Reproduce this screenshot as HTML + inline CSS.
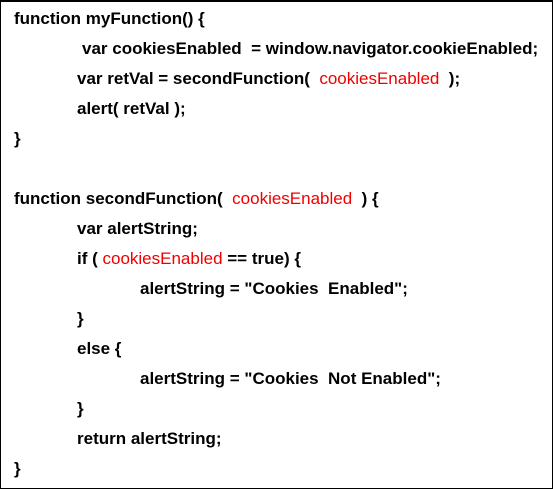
<!DOCTYPE html>
<html><head><style>
html,body{margin:0;padding:0;background:#fff}
.box{position:relative;width:551px;height:486px;border:1px solid #000;border-top-width:2px;box-sizing:content-box;overflow:hidden}
.l{position:absolute;left:0;font:bold 17px "Liberation Sans",Arial,sans-serif;color:#000;line-height:20px;white-space:pre}
.r{color:#e00;font-weight:normal}
</style></head><body><div class="box">
<div class="l" style="top:7px;left:13px">function myFunction() {</div>
<div class="l" style="top:37px;left:81px">var cookiesEnabled  = window.navigator.cookieEnabled;</div>
<div class="l" style="top:67px;left:76px">var retVal = secondFunction(  <span class="r">cookiesEnabled</span>  );</div>
<div class="l" style="top:97px;left:76px">alert( retVal );</div>
<div class="l" style="top:127px;left:13px">}</div>
<div class="l" style="top:187px;left:13px">function secondFunction(  <span class="r">cookiesEnabled</span>  ) {</div>
<div class="l" style="top:217px;left:76px">var alertString;</div>
<div class="l" style="top:247px;left:76px">if ( <span class="r">cookiesEnabled</span> == true) {</div>
<div class="l" style="top:277px;left:139px">alertString = "Cookies  Enabled";</div>
<div class="l" style="top:307px;left:76px">}</div>
<div class="l" style="top:337px;left:76px">else {</div>
<div class="l" style="top:367px;left:139px">alertString = "Cookies  Not Enabled";</div>
<div class="l" style="top:397px;left:76px">}</div>
<div class="l" style="top:427px;left:76px">return alertString;</div>
<div class="l" style="top:457px;left:13px">}</div>
</div></body></html>
